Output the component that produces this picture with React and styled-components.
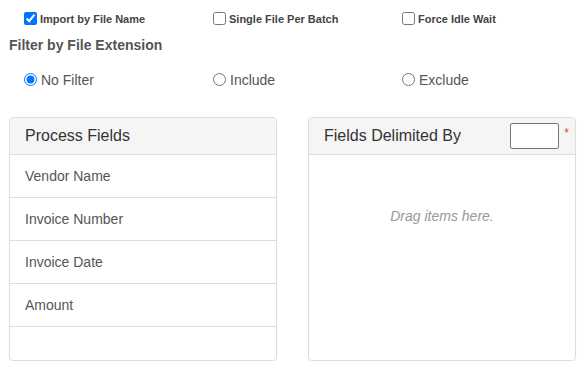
import React from 'react'
import styled, { createGlobalStyle } from 'styled-components'

const GlobalStyle = createGlobalStyle`
  body {
    margin: 0;
    background: #fff;
    font-family: "Liberation Sans", Arial, sans-serif;
    color: #555;
  }
`

const Page = styled.div`
  padding: 11px 9px 0 9px;
  width: 567px;
`

const OptionRow = styled.div`
  display: grid;
  grid-template-columns: repeat(3, 189px);
  margin-top: ${({ $top }) => $top || 0}px;
`

const Option = styled.label`
  display: flex;
  align-items: center;
  gap: ${({ $big }) => ($big ? 4 : 3)}px;
  padding-left: 15px;
  height: 15px;
  font-size: ${({ $big }) => ($big ? 14 : 11)}px;
  font-weight: ${({ $big }) => ($big ? 'normal' : 'bold')};
  color: ${({ $big }) => ($big ? '#555' : '#444')};
  input {
    margin: 0;
    width: 13px;
    height: 13px;
  }
`

const Heading = styled.div`
  margin-top: 9px;
  font-size: 14px;
  line-height: 20px;
  font-weight: bold;
  color: #555;
`

const Panels = styled.div`
  display: grid;
  grid-template-columns: 268px 268px;
  column-gap: 31px;
  margin-top: 30px;
`

const Panel = styled.div`
  border: 1px solid #ddd;
  border-radius: 4px;
  box-shadow: 0 1px 1px rgba(0, 0, 0, 0.05);
  display: flex;
  flex-direction: column;
  height: 242px;
  overflow: hidden;
`

const PanelHeader = styled.div`
  display: flex;
  align-items: center;
  height: 36px;
  padding: 0 6px 0 15px;
  background: #f5f5f5;
  border-bottom: 1px solid #ddd;
  font-size: 16px;
  color: #333;
`

const Title = styled.div`
  flex: 1;
`

const DelimInput = styled.input`
  box-sizing: border-box;
  width: 49px;
  height: 26px;
  margin: 0;
  border: 1px solid #767676;
  border-radius: 2px;
  background: #fff;
`

const Required = styled.span`
  color: #e8412c;
  font-size: 12px;
  margin-left: 5px;
  align-self: flex-start;
  margin-top: 8px;
`

const Item = styled.div`
  padding: 11px 15px;
  line-height: 20px;
  font-size: 14px;
  color: #555;
  border-bottom: 1px solid #ddd;
`

const DropZone = styled.div`
  flex: 1;
  padding-top: 51px;
  text-align: center;
  font-size: 14px;
  line-height: 20px;
  font-style: italic;
  color: #999;
`

const fields = ['Vendor Name', 'Invoice Number', 'Invoice Date', 'Amount']

const App = () => {
  return (
    <>
      <GlobalStyle />
      <Page>
        <OptionRow>
          <Option><input type="checkbox" defaultChecked />Import by File Name</Option>
          <Option><input type="checkbox" />Single File Per Batch</Option>
          <Option><input type="checkbox" />Force Idle Wait</Option>
        </OptionRow>
        <Heading>Filter by File Extension</Heading>
        <OptionRow $top={17}>
          <Option $big><input type="radio" name="filter" defaultChecked />No Filter</Option>
          <Option $big><input type="radio" name="filter" />Include</Option>
          <Option $big><input type="radio" name="filter" />Exclude</Option>
        </OptionRow>
        <Panels>
          <Panel>
            <PanelHeader><Title>Process Fields</Title></PanelHeader>
            {fields.map((f) => (
              <Item key={f}>{f}</Item>
            ))}
          </Panel>
          <Panel>
            <PanelHeader>
              <Title>Fields Delimited By</Title>
              <DelimInput type="text" />
              <Required>*</Required>
            </PanelHeader>
            <DropZone>Drag items here.</DropZone>
          </Panel>
        </Panels>
      </Page>
    </>
  )
}

export default App
